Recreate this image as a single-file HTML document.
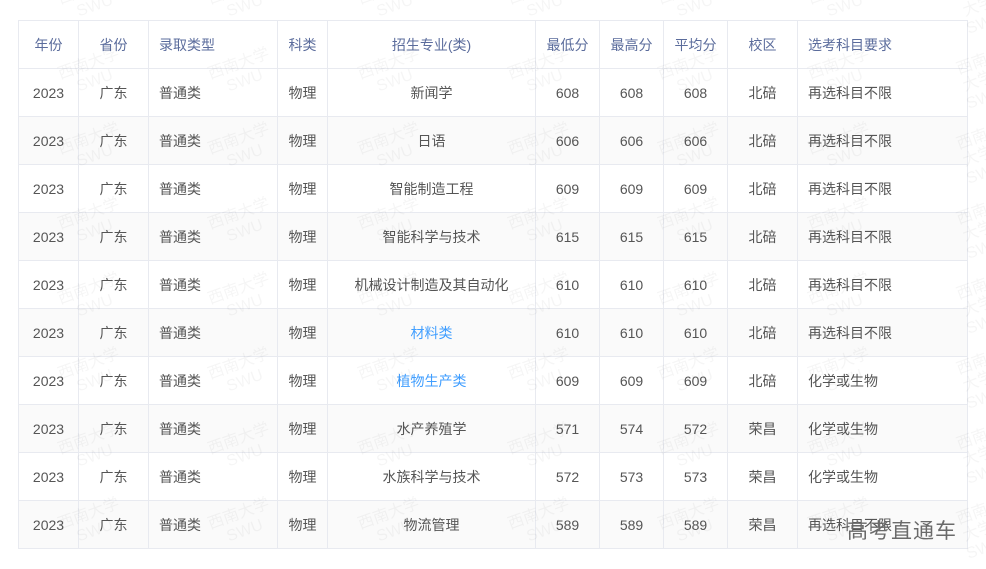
<!DOCTYPE html><html><head><meta charset="utf-8"><style>
body{margin:0;width:986px;height:569px;background:#fff;position:relative;overflow:hidden;font-family:"Liberation Sans","Noto Sans CJK SC",sans-serif;font-size:14px;color:#555}
.t{position:absolute;left:18px;top:20px;width:949px;border-top:1px solid #e8eaf0;border-left:1px solid #e8eaf0}
.r{display:flex;height:47px;border-bottom:1px solid #e8eaf0}
.r:nth-child(odd):not(.h){background:#fafafa}
.c{border-right:1px solid #e8eaf0;display:flex;align-items:center;justify-content:center;box-sizing:border-box}
.l{justify-content:flex-start;padding-left:10px}
.h .c{color:#5b6c9c}
.b{color:#409eff}
.wm{position:absolute;color:rgba(0,0,0,0.04);font-size:16px;line-height:18px;transform:rotate(-20deg);text-align:center;pointer-events:none}
.ov{position:absolute;left:847px;top:515px;font-size:21px;color:#6a6a6a;letter-spacing:1px}
</style></head><body>
<div class="t" id="t"></div>
<div class="ov">高考直通车</div>
<script>
var w=[60,70,129,50,208,64,64,64,70,170];
var al=['','','l','','','','','','','l'];
var h=['年份','省份','录取类型','科类','招生专业(类)','最低分','最高分','平均分','校区','选考科目要求'];
var d=[['新闻学',608,608,608,'北碚','再选科目不限'],['日语',606,606,606,'北碚','再选科目不限'],['智能制造工程',609,609,609,'北碚','再选科目不限'],['智能科学与技术',615,615,615,'北碚','再选科目不限'],['机械设计制造及其自动化',610,610,610,'北碚','再选科目不限'],['材料类',610,610,610,'北碚','再选科目不限'],['植物生产类',609,609,609,'北碚','化学或生物'],['水产养殖学',571,574,572,'荣昌','化学或生物'],['水族科学与技术',572,573,573,'荣昌','化学或生物'],['物流管理',589,589,589,'荣昌','再选科目不限']];
function row(a,cls){var s='<div class="r '+cls+'">';a.forEach(function(v,i){var b=(i==4&&(v=='材料类'||v=='植物生产类'))?' b':'';s+='<div class="c '+al[i]+b+'" style="width:'+w[i]+'px">'+v+'</div>'});return s+'</div>'}
var s=row(h,'h');d.forEach(function(x){s+=row([2023,'广东','普通类','物理'].concat(x),'')});
document.getElementById('t').innerHTML=s;
var m='';for(var y=-20;y<569;y+=75)for(var x=60;x<986;x+=150){m+='<div class="wm" style="left:'+x+'px;top:'+y+'px">西南大学<br>SWU</div>'}
document.body.insertAdjacentHTML('beforeend',m);
</script>
</body></html>
